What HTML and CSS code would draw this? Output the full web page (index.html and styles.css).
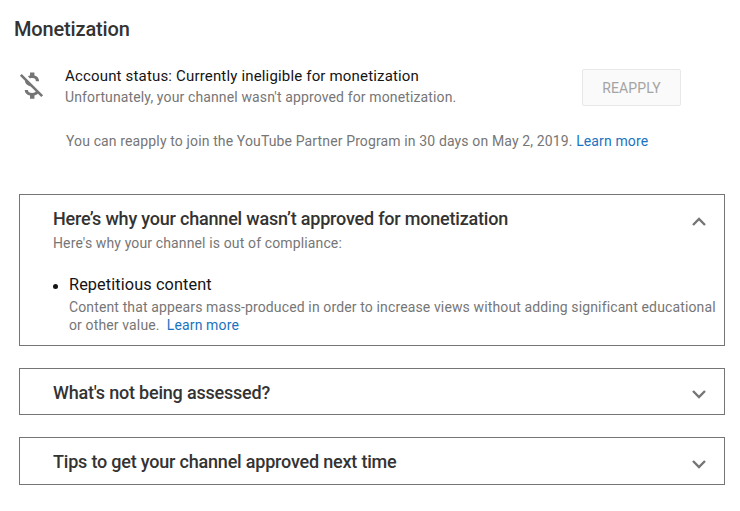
FILE: index.html
```html
<!DOCTYPE html>
<html lang="en">
<head>
<meta charset="utf-8">
<title>Monetization</title>
<link rel="stylesheet" href="styles.css">
</head>
<body>
<h1 class="title">Monetization</h1>
<section class="status">
  <svg class="status-icon" viewBox="0 0 24 24" width="35" height="35" aria-hidden="true"><path fill="#757575" d="M12.5 6.9c1.78 0 2.44.85 2.5 2.1h2.21c-.07-1.72-1.12-3.3-3.21-3.81V3h-3v2.16c-.53.12-1.03.3-1.48.54l1.47 1.47c.41-.17.91-.27 1.51-.27zM5.33 4.06L4.06 5.33 7.5 8.77c0 2.08 1.56 3.21 3.91 3.91l3.51 3.51c-.34.48-1.05.91-2.42.91-2.06 0-2.87-.92-2.98-2.1h-2.2c.12 2.19 1.76 3.42 3.68 3.83V21h3v-2.15c.96-.18 1.82-.55 2.45-1.12l2.22 2.22 1.27-1.27L5.33 4.06z"/></svg>
  <div class="status-text">
    <p class="status-main">Account status: Currently ineligible for monetization</p>
    <p class="muted">Unfortunately, your channel wasn't approved for monetization.</p>
  </div>
  <button class="reapply" disabled>REAPPLY</button>
</section>
<p class="muted reapply-note">You can reapply to join the YouTube Partner Program in 30 days on May 2, 2019. <a href="#">Learn more</a></p>

<section class="panel panel-open">
  <div class="panel-head">
    <h2>Here’s why your channel wasn’t approved for monetization</h2>
    <svg class="chev" viewBox="0 0 16 10" width="16" height="10" aria-hidden="true"><path d="M2 8l6-6 6 6" fill="none" stroke="#757575" stroke-width="2.4"/></svg>
  </div>
  <p class="muted intro">Here's why your channel is out of compliance:</p>
  <ul class="reasons">
    <li>
      <span class="reason-name">Repetitious content</span>
      <p class="muted">Content that appears mass-produced in order to increase views without adding significant educational or other value.&nbsp; <a href="#">Learn more</a></p>
    </li>
  </ul>
</section>

<section class="panel panel-closed panel-a">
  <h2>What's not being assessed?</h2>
  <svg class="chev" viewBox="0 0 16 10" width="16" height="10" aria-hidden="true"><path d="M2 2l6 6 6-6" fill="none" stroke="#757575" stroke-width="2.4"/></svg>
</section>
<section class="panel panel-closed panel-b">
  <h2>Tips to get your channel approved next time</h2>
  <svg class="chev" viewBox="0 0 16 10" width="16" height="10" aria-hidden="true"><path d="M2 2l6 6 6-6" fill="none" stroke="#757575" stroke-width="2.4"/></svg>
</section>
</body>
</html>
```
FILE: styles.css
```css
* { box-sizing: border-box; }
html, body { margin: 0; padding: 0; }
body {
  width: 740px;
  height: 511px;
  overflow: hidden;
  background: #fff;
  font-family: Roboto, "Liberation Sans", sans-serif;
  font-size: 14px;
  color: #282828;
  padding: 17px 15px 0 14px;
}
h1, h2, p, ul { margin: 0; padding: 0; }
a { color: #1a73c0; text-decoration: none; }
.title { font-size: 20px; line-height: 24px; font-weight: 500; color: #333; letter-spacing: -0.15px; }
.muted { font-size: 14px; line-height: 18px; color: #767676; letter-spacing: 0.13px; }
.status { display: flex; align-items: flex-start; margin-top: 25px; }
.status-icon { margin: 2px 0 0 0; flex: none; }
.status-text { width: 517px; margin-left: 16px; }
.status-main { font-size: 15px; line-height: 20px; color: #141414; letter-spacing: 0.17px; }
.status-text .muted { line-height: 19px; margin-top: 2px; }
.reapply {
  width: 99px;
  height: 37px;
  margin-top: 3px;
  background: #fafafa;
  border: 1px solid #e8e8e8;
  border-radius: 2px;
  font: 400 14px Roboto, "Liberation Sans", sans-serif;
  letter-spacing: 0.1px;
  color: #a4a4a4;
}
.reapply-note { margin: 24px 0 0 52px; line-height: 20px; }
.panel { margin-left: 5px; width: 706px; border: 1px solid #757575; }
.panel h2 { font-size: 18px; line-height: 24px; font-weight: 500; color: #333; letter-spacing: -0.2px; }
.panel-open { margin-top: 43px; height: 152px; padding: 12px 0 0 33px; }
.panel-head { display: flex; justify-content: space-between; align-items: center; padding-right: 17px; }
.panel-head .chev { margin-top: 5px; }
.intro { margin-top: 3px; }
.reasons { margin-top: 23px; padding-left: 16px; list-style: none; }
.reasons li { position: relative; }
.reasons li::before {
  content: "";
  position: absolute;
  left: -16px;
  top: 9px;
  width: 5px;
  height: 5px;
  border-radius: 50%;
  background: #141414;
}
.reason-name { font-size: 16.3px; line-height: 20px; color: #141414; display: block; letter-spacing: 0.1px; }
.reasons p { line-height: 18px; margin-top: 3px; width: 651px; }
.panel-closed { display: flex; justify-content: space-between; align-items: center; padding: 2px 17px 0 33px; }
.panel-closed .chev { margin-top: 2px; }
.panel-a { margin-top: 22px; height: 47px; }
.panel-b { margin-top: 22px; height: 48px; padding-top: 1px; }
.panel-b .chev { margin-top: 4px; }
```
